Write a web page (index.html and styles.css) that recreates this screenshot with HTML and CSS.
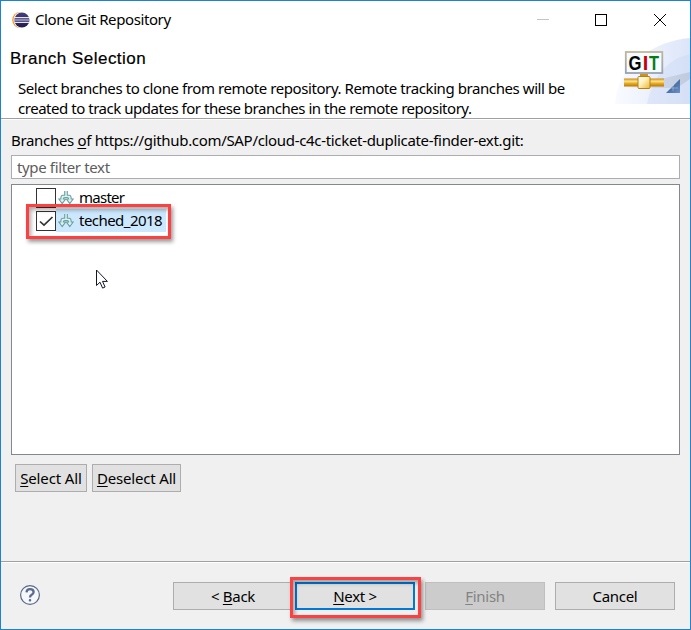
FILE: index.html
```html
<!DOCTYPE html>
<html lang="en">
<head>
<meta charset="utf-8">
<title>Clone Git Repository</title>
<link rel="stylesheet" href="styles.css">
</head>
<body>
<svg width="0" height="0" class="defs">
  <defs>
    <linearGradient id="gold" x1="0" y1="0" x2="0" y2="1"><stop offset="0" stop-color="#c98a10"/><stop offset=".35" stop-color="#ffe48a"/><stop offset=".6" stop-color="#e9ac25"/><stop offset="1" stop-color="#b87800"/></linearGradient>
    <linearGradient id="cube" x1="0" y1="0" x2="1" y2="1"><stop offset="0" stop-color="#fff"/><stop offset=".4" stop-color="#fff3c4"/><stop offset="1" stop-color="#edb52f"/></linearGradient>
    <linearGradient id="swoosh" x1="0" y1="0" x2="1" y2="0"><stop offset="0" stop-color="#f8faff"/><stop offset="1" stop-color="#d6e1f8"/></linearGradient>
    <linearGradient id="shade" x1="0" y1="0" x2="1" y2="0"><stop offset="0" stop-color="#b9c0cc" stop-opacity="0"/><stop offset="1" stop-color="#b9c4d6"/></linearGradient>
    <linearGradient id="frame" x1="0" y1="0" x2="0" y2="1"><stop offset="0" stop-color="#c0b69a"/><stop offset="1" stop-color="#98a2b0"/></linearGradient>
    <linearGradient id="corner" x1="0" y1="0" x2="1" y2="1"><stop offset="0" stop-color="#234a85"/><stop offset="1" stop-color="#6c92c6"/></linearGradient>
    <linearGradient id="orb" x1="0" y1="0" x2="0" y2="1"><stop offset="0" stop-color="#46407d"/><stop offset="1" stop-color="#211a50"/></linearGradient>
    <symbol id="branch" viewBox="0 0 16 16">
      <path d="M6.700 1v4.200H4.800Q2.800 5.200 2.800 9H.8L4.200 13.500 7.600 9H5.300Q5.300 7.500 7 7.500h2q1.700 0 1.700 1.500H8.400l3.400 4.500L15.200 9h-2Q13.200 5.200 11.200 5.200H9.300V1" fill="#d9f3f2" stroke="#6d9f9e" stroke-width="1.100"/>
    </symbol>
  </defs>
</svg>
<main class="window">
  <header class="titlebar">
    <svg class="app-icon" width="18" height="18" viewBox="0 0 18 18"><circle cx="8.200" cy="9" r="8" fill="#f29a32"/><circle cx="9.600" cy="9" r="8.100" fill="#fff"/><circle cx="9.900" cy="9" r="7.600" fill="url(#orb)"/><path d="M2.500 6.700h14.800M2.200 9h15.500M2.500 11.300h14.800" stroke="#e4e4f2" stroke-width="1.200"/></svg>
    <h1 class="caption">Clone Git Repository</h1>
    <svg class="controls" width="132" height="18" viewBox="0 0 132 18" fill="none" shape-rendering="crispEdges"><path d="M0 8.500h12" stroke="#c4c4c4"/><rect x="58.500" y="3.500" width="11" height="11" stroke="#000"/><path d="M117 3l12 12M129 3l-12 12" stroke="#000" shape-rendering="auto"/></svg>
  </header>
  <section class="banner">
    <div class="intro">
      <h2 class="heading">Branch Selection</h2>
      <p class="description"><span class="line-a">Select branches to clone from remote repository. Remote tracking branches will be</span><br><span class="line-b">created to track updates for these branches in the remote repository.</span></p>
    </div>
    <svg class="git" width="75" height="66" viewBox="0 0 75 66">
      <path d="M0 66C3 25 40 3 75 0v66z" fill="url(#swoosh)" opacity=".85"/>
      <path d="M32 66C38 35 56 20 75 16v50z" fill="#c5d5f3" opacity=".35"/>
      <path d="M8 50L75 34v7L62 50z" fill="url(#shade)" opacity=".75"/>
      <rect x="10.800" y="14" width="36.500" height="21" fill="#f5fcff" stroke="url(#frame)" stroke-width="1.800"/>
      <g class="git-letters"><text x="13.500" y="31.500" fill="#050505" textLength="13" lengthAdjust="spacingAndGlyphs">G</text><text x="27.800" y="31.500" fill="#c8000b">I</text><text x="34" y="31.500" fill="#087b16" textLength="10" lengthAdjust="spacingAndGlyphs">T</text></g>
      <rect x="25" y="36" width="8" height="4" fill="#d2911a"/>
      <rect x="9" y="40.500" width="40" height="8" fill="url(#gold)"/>
      <rect x="23" y="38.500" width="12" height="12" rx="1" fill="url(#cube)" stroke="#b98010"/>
      <path d="M51 55L65 41v14z" fill="url(#corner)"/><path d="M55 50h8M58 46v7" stroke="#d9e6f5" stroke-width=".7" opacity=".6"/>
    </svg>
  </section>
  <section class="content">
    <label class="list-label" for="filter">Branches <u>o</u>f https://github.com/SAP/cloud-c4c-ticket-duplicate-finder-ext.git:</label>
    <div class="filter">type filter text</div>
    <div class="list">
      <div class="row"><span class="check"></span><span class="item"><svg class="branch"><use href="#branch"/></svg><span class="master">master</span></span></div>
      <div class="row"><span class="check"><svg width="18" height="18" viewBox="0 0 18 18"><path d="M3 9.500L7 13.200 15.500 5" fill="none" stroke="#333" stroke-width="1.700"/></svg></span><span class="item selected"><svg class="branch"><use href="#branch"/></svg><span class="teched">teched_2018</span></span><span class="marker marker-row"></span></div>
      <svg class="cursor" width="14" height="21" viewBox="0 0 14 21"><path d="M1.500 1v15.500l3.500-3.300 2.600 5.900 2.500-1.100-2.600-5.600h4.900z" fill="#fff" stroke="#15152a"/></svg>
    </div>
    <div class="actions"><button class="btn select-all"><span><u>S</u>elect All</span></button><button class="btn deselect-all"><span><u>D</u>eselect All</span></button></div>
  </section>
  <footer class="footer">
    <svg class="help" width="22" height="22" viewBox="0 0 22 22"><circle cx="11" cy="11" r="9.400" fill="#f6f7f9" stroke="#586987" stroke-width="1.200"/><path d="M7.500 8.400Q7.700 5.200 11 5.200q3.600 0 3.600 2.900 0 1.700-1.900 2.700-1.700 1-1.700 2.700" fill="none" stroke="#5a6a91" stroke-width="2.300"/><rect x="9.800" y="15" width="2.400" height="2.400" rx="1" fill="#5a6a91"/></svg>
    <div class="nav">
      <button class="btn back"><span>&lt; <u>B</u>ack</span></button>
      <span class="next-wrap"><button class="btn next"><span><u>N</u>ext &gt;</span></button><span class="marker marker-next"></span></span>
      <button class="btn finish" disabled><span><u>F</u>inish</span></button>
      <button class="btn cancel"><span>Cancel</span></button>
    </div>
  </footer>
</main>
</body>
</html>
```
FILE: styles.css
```css
* { box-sizing: border-box; }
body { margin: 0; font: 15px/20px "Noto Sans", sans-serif; color: #000; }
.defs { position: absolute; }
.window { width: 691px; height: 630px; border: 1px solid #1883d7; background: #f0f0f0; display: flex; flex-direction: column; overflow: hidden; }
.titlebar { height: 37px; flex: none; background: #fff; display: flex; align-items: center; padding-left: 11px; }
.app-icon { margin-right: 5px; }
.caption { font-size: 15px; font-weight: 400; margin: -2px 0 0; letter-spacing: -.4px; }
.controls { margin-left: auto; margin-right: 21px; }
.banner { height: 82px; flex: none; background: #fff; border-bottom: 1px solid #fff; box-shadow: inset 0 -1px #a0a0a0; display: flex; justify-content: space-between; }
.intro { padding: 10px 0 0 9px; white-space: nowrap; }
.heading { font: 400 17px/22px "Liberation Sans", sans-serif; letter-spacing: .48px; margin: 0; -webkit-text-stroke: .2px #000; }
.description { margin: 8px 0 0 8px; letter-spacing: -.42px; }
.line-b { letter-spacing: -.47px; }
.git { flex: none; }
.git-letters { font: 700 20px "Liberation Sans", sans-serif; }
.content { padding: 10px 10px 0; flex: 1; }
.list-label { display: block; height: 25px; letter-spacing: -.32px; white-space: nowrap; }
.filter { height: 24px; border: 1px solid #abadb3; background: #fff; padding: 0 5px; color: #5d5d5d; line-height: 22px; letter-spacing: -.36px; }
.list { height: 271px; margin-top: 5px; border: 1px solid #828790; background: #fff; padding: 1px 0 0 24px; position: relative; }
.row { display: flex; align-items: center; height: 23px; width: max-content; position: relative; }
.check { width: 20px; height: 20px; border: 1px solid #333; background: #fff; }
.check svg { display: block; }
.item { display: flex; align-items: center; height: 23px; padding: 0 4px 0 2px; }
.selected { background: #cce8ff; }
.master { letter-spacing: -.75px; margin-top: -1px; }
.teched { letter-spacing: -.54px; margin-top: -1px; }
.branch { width: 16px; height: 16px; margin-right: 5px; }
.marker { position: absolute; border: 3px solid #fb4242; box-shadow: 2px 3px 4px #0006, inset 2px 3px 4px #0005; pointer-events: none; }
.marker-row { left: -10px; top: -5px; width: 145px; height: 35px; }
.cursor { position: absolute; left: 83px; top: 84px; }
.actions { display: flex; gap: 5px; padding: 9px 0 0 4px; }
.btn { height: 28px; border: 1px solid #adadad; background: #e1e1e1; font: inherit; color: #000; padding: 0; line-height: 26px; letter-spacing: -.3px; white-space: nowrap; }
.select-all { width: 72px; letter-spacing: -.12px; }
.deselect-all { width: 89px; letter-spacing: -.18px; }
.footer { height: 68px; flex: none; border-top: 1px solid #a0a0a0; box-shadow: inset 0 1px #fff; display: flex; justify-content: space-between; padding: 20px 15px 0 18px; }
.help { margin-top: 2px; }
.nav { display: flex; }
.nav .btn { width: 120px; }
.next-wrap { position: relative; margin: 0 10px 0 2px; height: 28px; display: flex; }
.next { border: 2px solid #0078d7; line-height: 24px; }
.marker-next { left: -5px; top: -5px; width: 131px; height: 41px; }
.finish { margin-right: 10px; background: #ccc; border-color: #bfbfbf; color: #838383; }
u { text-underline-offset: 2px; text-decoration-thickness: 1px; text-decoration-skip-ink: none; }
```
